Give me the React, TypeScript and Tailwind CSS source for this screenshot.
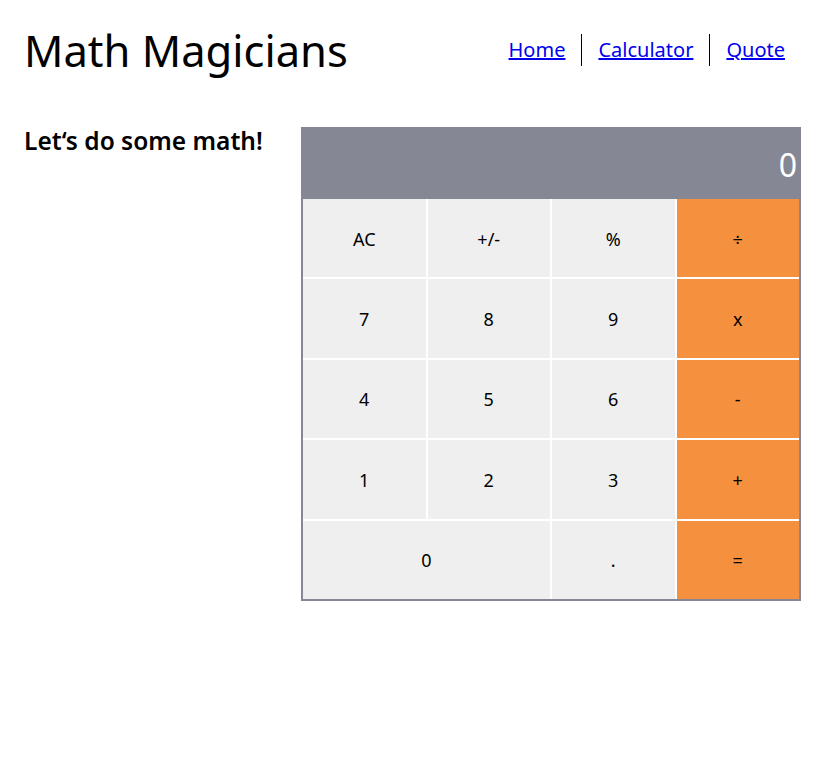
import React from "react";

const keys: { label: string; orange?: boolean; wide?: boolean }[] = [
  { label: "AC" },
  { label: "+/-" },
  { label: "%" },
  { label: "÷", orange: true },
  { label: "7" },
  { label: "8" },
  { label: "9" },
  { label: "x", orange: true },
  { label: "4" },
  { label: "5" },
  { label: "6" },
  { label: "-", orange: true },
  { label: "1" },
  { label: "2" },
  { label: "3" },
  { label: "+", orange: true },
  { label: "0", wide: true },
  { label: "." },
  { label: "=", orange: true },
];

export default function App() {
  return (
    <div className="w-[825px] h-[770px] bg-white text-black" style={{ fontFamily: '"Noto Sans", sans-serif' }}>
      <header className="flex items-center justify-between pl-6 pr-10 pt-[22px]">
        <h1 className="text-[43.5px] leading-[56px] font-normal">Math Magicians</h1>
        <nav className="flex items-center text-[20px]">
          <a href="#" className="text-[#0000ee] underline px-4 leading-[32px]">Home</a>
          <span className="w-px h-[32px] bg-black" />
          <a href="#" className="text-[#0000ee] underline px-4 leading-[32px]">Calculator</a>
          <span className="w-px h-[32px] bg-black" />
          <a href="#" className="text-[#0000ee] underline pl-4 leading-[32px]">Quote</a>
        </nav>
      </header>
      <main className="flex justify-between px-6 mt-[49px]">
        <h2 className="text-[24.5px] font-semibold leading-[28px]">Let&lsquo;s do some math!</h2>
        <div className="w-[500px] border-2 border-[#858794] bg-[#858794]">
          <div className="h-[70px] flex items-end justify-end pr-[2px] pb-[18px] text-white text-[32px] leading-none">
            0
          </div>
          <div className="grid grid-cols-4 grid-rows-5 gap-[2px] bg-white h-[400px] text-[18px]">
            {keys.map((k) => (
              <button
                key={k.label}
                className={`${k.wide ? "col-span-2" : ""} ${k.orange ? "bg-[#f5913e]" : "bg-[#efefef]"} flex items-center justify-center pt-[2px] text-black`}
              >
                {k.label}
              </button>
            ))}
          </div>
        </div>
      </main>
    </div>
  );
}
